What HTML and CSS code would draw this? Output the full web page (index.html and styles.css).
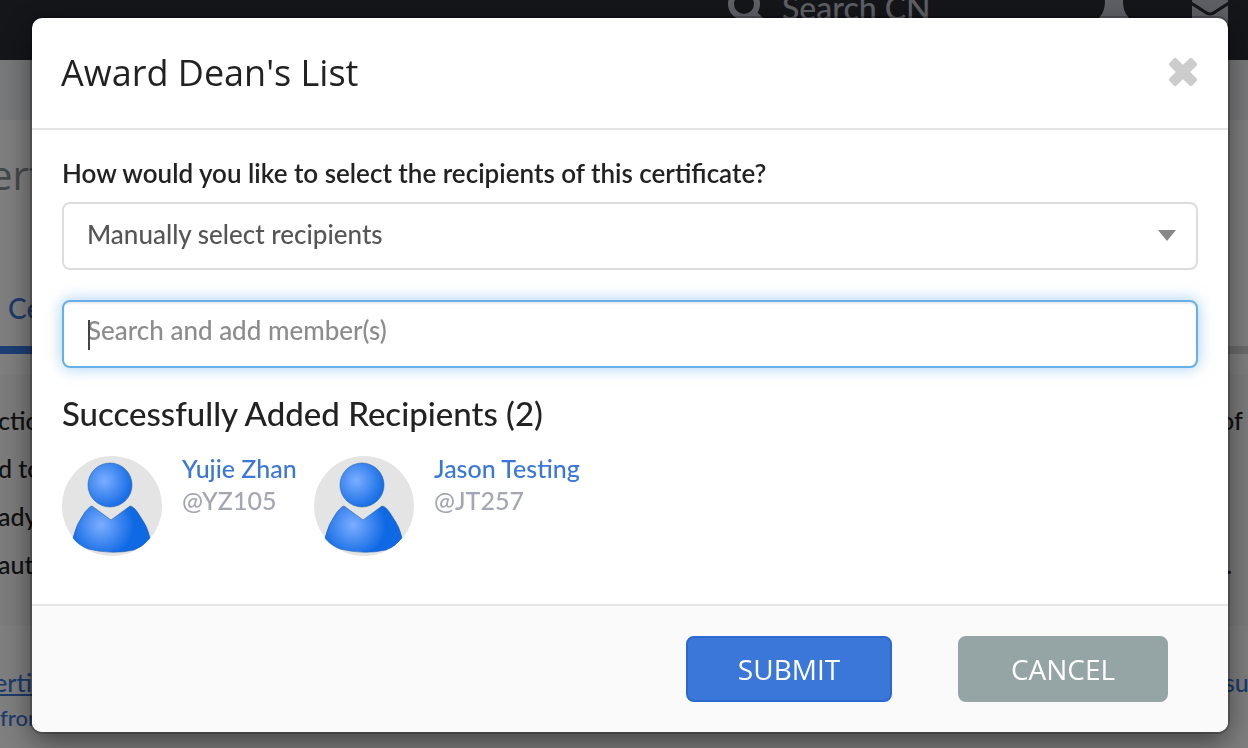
FILE: index.html
```html
<!DOCTYPE html>
<html lang="en">
<head>
    <meta charset="UTF-8">
    <meta name="viewport" content="width=device-width, initial-scale=1.0">
    <title>Award Dean's List</title>
    <link rel="stylesheet" href="styles.css">
</head>
<body>

<div class="page">
    <div class="topbar">
        <svg class="icon-search" width="34" height="36" viewBox="0 0 34 36"><circle cx="16" cy="12" r="13" fill="none" stroke="#bcc0cc" stroke-width="6"/><path d="M24 20l9 9" stroke="#bcc0cc" stroke-width="7"/></svg>
        <span class="search-text">Search CN</span>
        <svg class="icon-bell" width="36" height="24" viewBox="0 0 36 24"><path d="M9 0h18c0 7 1 12 6 18q3 3 3 6H0q0-3 3-6C8 12 9 7 9 0z" fill="#bcc0cc"/></svg>
        <svg class="icon-mail" width="36" height="24" viewBox="0 0 36 24"><path d="M0 0h36v24H0z" fill="#bcc0cc"/><path d="M-1 3l14 9q5 4 10 0L37 3" fill="none" stroke="#2a2c34" stroke-width="3"/></svg>
    </div>
    <div class="subbar"></div>
    <div class="heading">ertif</div>
    <div class="tabs"><a href="#" class="tab">Cert</a></div>
    <div class="info">
        <div class="info-row"><span>ction</span><span class="end">of a</span></div>
        <div class="info-row"><span>d to</span></div>
        <div class="info-row"><span>ady</span></div>
        <div class="info-row"><span>aut</span><span class="end">&nbsp;.</span></div>
    </div>
    <div class="links">
        <div class="link-row"><a href="#" class="underlined">ertifi</a><a href="#" class="end">su</a></div>
        <div class="link-row small"><a href="#">from</a></div>
    </div>
</div>

<div class="overlay">
    <div class="modal" role="dialog" aria-labelledby="modalTitle">
        <div class="modal-header">
            <h1 id="modalTitle">Award Dean's List</h1>
            <button type="button" class="close" aria-label="Close">
                <svg width="30" height="30" viewBox="0 0 30 30"><g fill="#ccc" transform="rotate(45 15 15)"><rect x="-1" y="10" width="32" height="10" rx="2"/><rect x="10" y="-1" width="10" height="32" rx="2"/></g></svg>
            </button>
        </div>
        <form id="awardForm">
            <div class="modal-body">
                <label for="method">How would you like to select the recipients of this certificate?</label>
                <div class="select-box">
                    <select id="method" name="method">
                        <option>Manually select recipients</option>
                    </select>
                </div>
                <div class="search-box">
                    <input type="text" id="member" name="member" placeholder="Search and add member(s)" aria-label="Search and add member(s)">
                    <span class="caret"></span>
                </div>
                <h2>Successfully Added Recipients (2)</h2>
                <div class="recipients">
                    <div class="recipient">
                        <svg class="avatar" viewBox="0 0 100 100">
                            <defs>
                                <radialGradient id="head" cx="0.37" cy="0.4" r="0.62"><stop offset="0" stop-color="#7caeff"/><stop offset="1" stop-color="#176ee6"/></radialGradient>
                                <radialGradient id="torso" gradientUnits="userSpaceOnUse" cx="39" cy="69" r="33"><stop offset="0" stop-color="#7caeff"/><stop offset="1" stop-color="#0f69e4"/></radialGradient>
                            </defs>
                            <circle cx="50" cy="50" r="50" fill="#e4e4e4"/>
                            <circle cx="48" cy="29" r="22" fill="url(#head)" stroke="#2463ad" stroke-width="0.6"/>
                            <path d="M30 50L49 64 68 50Q72 50 78 60Q86 71 88 82Q81 91 72 94Q50 99 26 93Q16 89 11 82Q14 68 23 56Q28 50 30 50z" fill="url(#torso)" stroke="#2463ad" stroke-width="0.6"/>
                        </svg>
                        <div class="who"><a href="#">Yujie Zhan</a><span>@YZ105</span></div>
                    </div>
                    <div class="recipient">
                        <svg class="avatar" viewBox="0 0 100 100">
                            <circle cx="50" cy="50" r="50" fill="#e4e4e4"/>
                            <circle cx="48" cy="29" r="22" fill="url(#head)" stroke="#2463ad" stroke-width="0.6"/>
                            <path d="M30 50L49 64 68 50Q72 50 78 60Q86 71 88 82Q81 91 72 94Q50 99 26 93Q16 89 11 82Q14 68 23 56Q28 50 30 50z" fill="url(#torso)" stroke="#2463ad" stroke-width="0.6"/>
                        </svg>
                        <div class="who"><a href="#">Jason Testing</a><span>@JT257</span></div>
                    </div>
                </div>
            </div>
            <div class="modal-footer">
                <button type="submit" class="btn btn-submit">SUBMIT</button>
                <button type="button" class="btn btn-cancel">CANCEL</button>
            </div>
        </form>
    </div>
</div>

</body>
</html>
```
FILE: styles.css
```css
* {
    box-sizing: border-box;
}
body {
    margin: 0;
    font-family: Lato, "Open Sans", sans-serif;
    font-size: 25px;
    font-weight: 500;
    color: #222;
    background: #fff;
}
a {
    color: #3a77d8;
    text-decoration: none;
}

/* page behind the dialog */
.page {
    height: 100vh;
    overflow: hidden;
}
.topbar {
    display: flex;
    justify-content: flex-end;
    height: 60px;
    padding-right: 20px;
    background: #2a2c34;
}
.icon-search {
    margin-top: -8px;
    margin-right: 20px;
    overflow: visible;
}
.search-text {
    width: 314px;
    margin-top: -8px;
    font-size: 32px;
    line-height: 32px;
    color: #bcc0cc;
}
.icon-mail {
    margin-left: 60px;
}
.subbar {
    height: 60px;
    background: #f0f2f6;
}
.heading {
    height: 170px;
    padding-top: 28px;
    margin-left: -10px;
    font-family: "Open Sans", sans-serif;
    font-size: 40px;
    line-height: 54px;
    color: #8a8f98;
}
.tabs {
    height: 64px;
    border-bottom: 8px solid #d6d6d6;
}
.tab {
    display: block;
    width: 200px;
    height: 64px;
    padding-left: 8px;
    border-bottom: 8px solid #3a7eea;
    font-size: 28px;
    line-height: 36px;
}
.info {
    margin-top: 20px;
    padding: 22px 0 38px;
    background: #f8f8f8;
}
.info-row, .link-row {
    display: flex;
    justify-content: space-between;
    height: 48px;
    line-height: 48px;
    margin-left: -2px;
}
.end {
    width: 28px;
    white-space: nowrap;
}
.links {
    padding-top: 38px;
}
.link-row {
    height: 36px;
    line-height: 36px;
    margin-left: -6px;
}
.link-row .end {
    width: 24px;
}
.small {
    margin-left: 0;
    font-size: 22px;
}
.underlined {
    text-decoration: underline;
}

/* dialog */
.overlay {
    position: fixed;
    inset: 0;
    padding: 18px 20px 16px 32px;
    background: rgba(0, 0, 0, 0.5);
}
.modal {
    background: #fff;
    border-radius: 10px;
    overflow: hidden;
    box-shadow: 0 0 0 2px rgba(0, 0, 0, 0.2), 0 10px 30px rgba(0, 0, 0, 0.5);
}
.modal-header {
    display: flex;
    align-items: center;
    justify-content: space-between;
    height: 112px;
    padding: 0 30px 2px 29px;
    border-bottom: 2px solid #e5e5e5;
}
.modal-header h1 {
    margin: 0;
    font-family: "Open Sans", sans-serif;
    font-size: 36px;
    font-weight: 400;
}
.close {
    width: 30px;
    height: 30px;
    padding: 0;
    border: none;
    background: none;
    cursor: pointer;
}
.close svg {
    display: block;
    margin: auto;
}
.modal-body {
    padding: 26px 30px 48px;
}
.modal-body label {
    display: block;
    margin-bottom: 12px;
    font-size: 26px;
    line-height: 34px;
    font-weight: 600;
}
.select-box, .search-box {
    position: relative;
    margin-bottom: 30px;
}
.select-box select, .search-box input {
    display: block;
    width: 100%;
    height: 68px;
    padding: 0 24px 4px 23px;
    border: 2px solid #ddd;
    border-radius: 8px;
    background: #fff;
    font-family: inherit;
    font-size: 26px;
    font-weight: 500;
    color: #555;
    appearance: none;
    outline: none;
}
.select-box::after {
    content: "";
    position: absolute;
    right: 22px;
    top: 28px;
    border: 9px solid transparent;
    border-top: 11px solid #888;
    border-bottom: none;
}
.search-box input {
    padding-bottom: 8px;
    border-color: #66afe9;
    box-shadow: inset 0 2px 2px rgba(0, 0, 0, 0.08), 0 0 16px rgba(102, 175, 233, 0.6);
}
.search-box input::placeholder {
    color: #8c8c8c;
}
.caret {
    position: absolute;
    left: 26px;
    top: 20px;
    width: 2px;
    height: 30px;
    background: #444;
}
.modal-body h2 {
    margin: -4px 0 24px;
    font-size: 33px;
    line-height: 38px;
    font-weight: 500;
}
.recipients {
    display: flex;
    gap: 12px;
}
.recipient {
    display: flex;
    gap: 20px;
    min-width: 240px;
}
.avatar {
    width: 100px;
    height: 100px;
}
.who {
    margin-top: -4px;
    line-height: 32px;
}
.who a, .who span {
    display: block;
}
.who span {
    color: #a3a7b2;
}
.modal-footer {
    display: flex;
    justify-content: flex-end;
    gap: 66px;
    padding: 30px 60px;
    border-top: 2px solid #e5e5e5;
    background: #fafafa;
}
.btn {
    width: 210px;
    height: 66px;
    border: 2px solid #95a5a6;
    border-radius: 8px;
    font-family: "Open Sans", sans-serif;
    font-size: 28px;
    font-weight: 500;
    color: #fff;
    background: #95a5a5;
    cursor: pointer;
}
.btn-submit {
    width: 206px;
    border-color: #2a69cf;
    background: #3a77d8;
}
```
